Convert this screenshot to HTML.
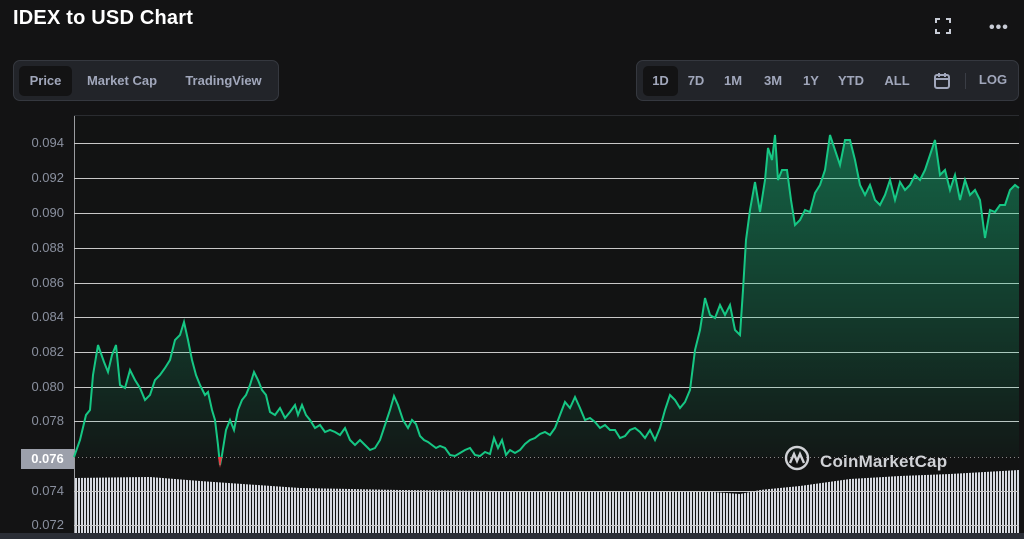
<!DOCTYPE html>
<html><head><meta charset="utf-8"><style>
*{margin:0;padding:0;box-sizing:border-box}
body{width:1024px;height:539px;background:#131314;font-family:"Liberation Sans",sans-serif;position:relative;overflow:hidden}
.t{position:absolute;left:13px;top:7px;color:#fff;font-weight:bold;font-size:20px;letter-spacing:0.2px}
.grp{position:absolute;background:#222429;border:1px solid #35383f;border-radius:7px;height:41px}
.b{position:absolute;top:5px;height:30px;line-height:30px;color:#a1a7bb;font-weight:bold;font-size:13px;text-align:center;border-radius:5px}
.act{background:#131314}
.yl{position:absolute;right:960px;color:#8a909f;font-size:13px;width:60px;text-align:right}
</style></head><body>
<div class="t">IDEX to USD Chart</div>
<svg style="position:absolute;left:934px;top:17px" width="18" height="18" viewBox="0 0 18 18" fill="none" stroke="#c8ccd6" stroke-width="2"><path d="M2 6V2h4M12 2h4v4M16 12v4h-4M6 16H2v-4"/></svg>
<div style="position:absolute;left:989px;top:19px;color:#c8ccd6;font-size:16px;font-weight:bold;letter-spacing:1px">•••</div>
<div class="grp" style="left:13px;top:60px;width:266px">
<div class="b act" style="left:5px;width:53px">Price</div>
<div class="b" style="left:63px;width:90px">Market Cap</div>
<div class="b" style="left:162px;width:95px">TradingView</div>
</div>
<div class="grp" style="left:636px;top:60px;width:383px">
<div class="b act" style="left:6px;width:35px">1D</div>
<div class="b" style="left:44px;width:30px">7D</div>
<div class="b" style="left:80px;width:32px">1M</div>
<div class="b" style="left:120px;width:32px">3M</div>
<div class="b" style="left:160px;width:28px">1Y</div>
<div class="b" style="left:196px;width:36px">YTD</div>
<div class="b" style="left:244px;width:32px">ALL</div>
<svg style="position:absolute;left:296px;top:11px" width="18" height="18" viewBox="0 0 18 18" fill="none" stroke="#a1a7bb" stroke-width="2"><rect x="2" y="3" width="14" height="13" rx="2"/><path d="M2 7h14M6 1v4M12 1v4"/></svg>
<div style="position:absolute;left:328px;top:12px;width:1px;height:16px;background:#3a3d45"></div>
<div class="b" style="left:338px;width:36px;top:4px">LOG</div>
</div>
<div class="yl" style="top:135px">0.094</div>
<div class="yl" style="top:170px">0.092</div>
<div class="yl" style="top:205px">0.090</div>
<div class="yl" style="top:240px">0.088</div>
<div class="yl" style="top:275px">0.086</div>
<div class="yl" style="top:309px">0.084</div>
<div class="yl" style="top:344px">0.082</div>
<div class="yl" style="top:379px">0.080</div>
<div class="yl" style="top:413px">0.078</div>
<div class="yl" style="top:483px">0.074</div>
<div class="yl" style="top:517px">0.072</div>
<div style="position:absolute;left:21px;top:449px;width:53px;height:20px;background:#9ca0ab;color:#fff;font-size:13px;font-weight:bold;line-height:20px;text-align:center">0.076</div>
<div style="position:absolute;left:0;top:533px;width:1024px;height:6px;background:#2b2e36"></div>
<svg style="position:absolute;left:0;top:0" width="1024" height="539">
<defs>
<linearGradient id="g" x1="0" y1="0" x2="0" y2="1"><stop offset="0" stop-color="#16c784" stop-opacity="0.45"/><stop offset="1" stop-color="#16c784" stop-opacity="0.03"/></linearGradient>
<pattern id="st" width="3" height="10" patternUnits="userSpaceOnUse"><rect x="0" y="0" width="2" height="10" fill="#d6d9e0"/></pattern>
</defs>
<rect x="74" y="115" width="945" height="418" fill="#121313"/>
<line x1="74.5" y1="115" x2="74.5" y2="533" stroke="#9a9ca0"/>
<line x1="74" y1="115.5" x2="1019" y2="115.5" stroke="#2a2c30"/>
<g stroke="#c8c8c8" stroke-width="1">
<line x1="74" y1="143.5" x2="1019" y2="143.5"/><line x1="74" y1="178.5" x2="1019" y2="178.5"/><line x1="74" y1="213.5" x2="1019" y2="213.5"/><line x1="74" y1="248.5" x2="1019" y2="248.5"/><line x1="74" y1="283.5" x2="1019" y2="283.5"/><line x1="74" y1="317.5" x2="1019" y2="317.5"/><line x1="74" y1="352.5" x2="1019" y2="352.5"/><line x1="74" y1="387.5" x2="1019" y2="387.5"/><line x1="74" y1="421.5" x2="1019" y2="421.5"/>
</g>
<path d="M75 478 L150 477 L200 481 L300 488 L400 490 L500 491 L600 491 L700 491 L740 494 L760 490 L800 486 L850 479 L900 476 L950 474 L1019 470 L1019 533 L75 533Z" fill="url(#st)"/>
<g stroke="#c8c8c8"><line x1="74" y1="491.5" x2="1019" y2="491.5"/><line x1="74" y1="525.5" x2="1019" y2="525.5"/></g>
<path id="p" d="M74,457 L80,440 86,415 90,410 93,375 98,345 104,362 108,372 112,355 116,345 120,385 125,388 130,370 135,380 140,388 145,400 150,395 155,380 160,375 165,368 170,360 175,340 180,335 184,322 188,340 192,360 196,375 200,385 205,395 208,392 212,410 215,420 218,445 220,465 222,455 226,430 230,420 234,430 238,410 242,400 246,395 250,385 254,372 258,380 262,390 266,395 270,412 275,415 280,408 285,418 290,412 295,405 298,415 302,405 306,415 310,420 315,428 320,425 325,432 330,430 335,432 340,435 345,428 350,440 355,445 360,440 365,445 370,450 375,448 380,440 385,425 390,410 394,396 398,405 403,420 408,428 412,420 416,424 420,436 424,440 428,442 432,445 436,448 440,446 445,448 450,455 455,456 460,453 465,450 470,448 475,455 480,456 485,452 490,454 494,438 498,448 502,440 506,455 510,450 515,453 520,450 525,444 530,440 535,438 540,434 545,432 550,435 555,428 560,415 565,402 570,408 575,397 580,408 585,420 590,418 595,422 600,428 605,425 610,430 615,430 620,438 625,436 630,430 635,428 640,432 645,438 650,430 655,440 660,428 665,410 670,395 675,400 680,408 685,402 690,390 695,350 700,330 705,298 710,315 715,318 720,305 725,315 730,305 735,330 740,335 743,290 746,240 750,210 755,182 760,212 765,180 768,148 772,160 775,135 778,180 782,170 787,170 791,200 795,225 800,220 805,210 810,212 815,193 820,185 825,170 830,135 835,150 840,165 845,140 850,140 855,160 860,185 865,195 870,185 875,200 880,205 885,195 890,180 895,200 900,182 905,190 910,185 915,175 920,180 925,170 930,155 935,140 940,175 945,170 950,190 955,175 960,200 965,180 970,195 975,190 980,200 985,238 990,210 995,212 1000,205 1005,205 1010,190 1015,185 1019,188" fill="none"/>
<path d="M74,457 L80,440 86,415 90,410 93,375 98,345 104,362 108,372 112,355 116,345 120,385 125,388 130,370 135,380 140,388 145,400 150,395 155,380 160,375 165,368 170,360 175,340 180,335 184,322 188,340 192,360 196,375 200,385 205,395 208,392 212,410 215,420 218,445 220,457 222,455 226,430 230,420 234,430 238,410 242,400 246,395 250,385 254,372 258,380 262,390 266,395 270,412 275,415 280,408 285,418 290,412 295,405 298,415 302,405 306,415 310,420 315,428 320,425 325,432 330,430 335,432 340,435 345,428 350,440 355,445 360,440 365,445 370,450 375,448 380,440 385,425 390,410 394,396 398,405 403,420 408,428 412,420 416,424 420,436 424,440 428,442 432,445 436,448 440,446 445,448 450,455 455,456 460,453 465,450 470,448 475,455 480,456 485,452 490,454 494,438 498,448 502,440 506,455 510,450 515,453 520,450 525,444 530,440 535,438 540,434 545,432 550,435 555,428 560,415 565,402 570,408 575,397 580,408 585,420 590,418 595,422 600,428 605,425 610,430 615,430 620,438 625,436 630,430 635,428 640,432 645,438 650,430 655,440 660,428 665,410 670,395 675,400 680,408 685,402 690,390 695,350 700,330 705,298 710,315 715,318 720,305 725,315 730,305 735,330 740,335 743,290 746,240 750,210 755,182 760,212 765,180 768,148 772,160 775,135 778,180 782,170 787,170 791,200 795,225 800,220 805,210 810,212 815,193 820,185 825,170 830,135 835,150 840,165 845,140 850,140 855,160 860,185 865,195 870,185 875,200 880,205 885,195 890,180 895,200 900,182 905,190 910,185 915,175 920,180 925,170 930,155 935,140 940,175 945,170 950,190 955,175 960,200 965,180 970,195 975,190 980,200 985,238 990,210 995,212 1000,205 1005,205 1010,190 1015,185 1019,188 L1019,457 L74,457Z" fill="url(#g)"/>
<line x1="74" y1="457.5" x2="1019" y2="457.5" stroke="#888" stroke-dasharray="1,3"/>
<use href="#p" stroke="#16c784" stroke-width="2"/>
<path d="M218,457 L220,468 L222,457Z" fill="#ea3943"/>
<g transform="translate(785,446)" fill="none" stroke="#d0d2d6" stroke-width="2.4"><circle cx="12" cy="12" r="11"/><path d="M5 17 L9 8 L12 15 L15 8 L19 17"/></g>
<text x="820" y="467" fill="#d0d2d6" font-family="Liberation Sans,sans-serif" font-weight="bold" font-size="17" letter-spacing="0.2">CoinMarketCap</text>
</svg>
</body></html>
